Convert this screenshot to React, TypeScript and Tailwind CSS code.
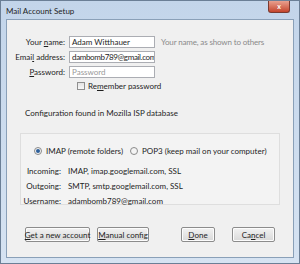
import React from "react";

const font = { fontFamily: 'Lato, "Open Sans", "DejaVu Sans", sans-serif' };

function Btn({ children }: { children: React.ReactNode }) {
  return (
    <div className="h-[15px] px-[4px] flex items-center justify-center whitespace-nowrap rounded-[2px] border border-[#8c8c8c] bg-gradient-to-b from-[#f2f2f2] to-[#d9d9d9] text-[8px] text-[#1e1e1e] shadow-[inset_0_0_0_1px_#fcfcfc]">
      {children}
    </div>
  );
}

function Field({ label, value, placeholder, tight }: { label: React.ReactNode; value?: string; placeholder?: string; tight?: boolean }) {
  return (
    <div className="flex items-center h-[15px]">
      <div className="w-[62px] text-right pr-[4px] text-[8px] text-[#1e1e1e] whitespace-nowrap">{label}</div>
      <div className="w-[86px] h-[12px] bg-white border border-[#abadb3] flex items-center px-[2px] text-[8px] overflow-hidden whitespace-nowrap">
        {value ? (
          <span className={tight ? "text-[#1e1e1e] tracking-[-0.35px]" : "text-[#1e1e1e]"}>{value}</span>
        ) : (
          <span className="text-[#9a9a9a]">{placeholder}</span>
        )}
      </div>
    </div>
  );
}

export default function App() {
  return (
    <div className="w-[300px] h-[264px] bg-gradient-to-b from-[#c3d5ea] to-[#d6e3f2] border border-[#6b7f96] flex flex-col" style={font}>
      <div className="h-[18px] flex items-start justify-between pl-[5px] pr-[9px]">
        <div className="text-[8px] text-[#1e1e1e] pt-[4px] whitespace-nowrap">Mail Account Setup</div>
        <div className="w-[22px] h-[12px] rounded-b-[3px] bg-gradient-to-b from-[#e8a08f] to-[#c4432b] border border-[#7a3a30] border-t-0 flex items-center justify-center text-white text-[7px] font-bold">
          x
        </div>
      </div>
      <div className="flex-1 mx-[5px] mb-[5px] border border-[#8aa0b8] bg-[#f0f0f0] flex flex-col whitespace-nowrap">
        <div className="pt-[14px] flex flex-col">
          <div className="flex items-center">
            <Field label={<>Your <u>n</u>ame:</>} value="Adam Witthauer" />
            <div className="pl-[6px] text-[8px] text-[#8a8a8a] tracking-[-0.15px]">Your name, as shown to others</div>
          </div>
          <Field label={<>Emai<u>l</u> address:</>} value="dambomb789@gmail.com" tight />
          <Field label={<><u>P</u>assword:</>} placeholder="Password" />
          <div className="flex items-center h-[14px] pl-[70px] gap-[3px]">
            <div className="w-[8px] h-[8px] border border-[#8f8f8f] bg-gradient-to-b from-[#e4e4e4] to-[#f8f8f8]" />
            <div className="text-[8px] text-[#1e1e1e]">Re<u>m</u>ember password</div>
          </div>
        </div>
        <div className="pl-[18px] pt-[14px] text-[8px] text-[#1e1e1e]">Configuration found in Mozilla ISP database</div>
        <div className="mx-[13px] mt-[14px] h-[72px] border border-[#dedede] bg-[#f3f3f3] flex flex-col pt-[11px]">
          <div className="flex items-center pl-[13px] text-[8px] text-[#1e1e1e]">
            <div className="w-[8px] h-[8px] rounded-full border border-[#8a8a8a] bg-[#f4f4f4] flex items-center justify-center">
              <div className="w-[4px] h-[4px] rounded-full bg-[#2d5f9a]" />
            </div>
            <span className="pl-[4px]">IMAP (remote folders)</span>
            <div className="ml-[7px] w-[8px] h-[8px] rounded-full border border-[#8a8a8a] bg-[#f4f4f4]" />
            <span className="pl-[4px]">POP3 (keep mail on your computer)</span>
          </div>
          <div className="pt-[6px] flex flex-col text-[8px] text-[#1e1e1e]">
            {[
              ["Incoming:", "IMAP, imap.googlemail.com, SSL"],
              ["Outgoing:", "SMTP, smtp.googlemail.com, SSL"],
              ["Username:", "adambomb789@gmail.com"],
            ].map(([k, v]) => (
              <div key={k} className="flex h-[15px] items-center">
                <div className="w-[40px] text-right">{k}</div>
                <div className="pl-[7px]">{v}</div>
              </div>
            ))}
          </div>
        </div>
        <div className="flex-1" />
        <div className="flex items-center pl-[18px] pr-[18px] pb-[15px]">
          <div className="w-[65px]"><Btn><u>G</u>et a new account</Btn></div>
          <div className="w-[52px] ml-[7px]"><Btn><u>M</u>anual config</Btn></div>
          <div className="flex-1" />
          <div className="w-[34px]"><Btn><u>D</u>one</Btn></div>
          <div className="w-[43px] ml-[17px]"><Btn>Ca<u>n</u>cel</Btn></div>
        </div>
      </div>
    </div>
  );
}
